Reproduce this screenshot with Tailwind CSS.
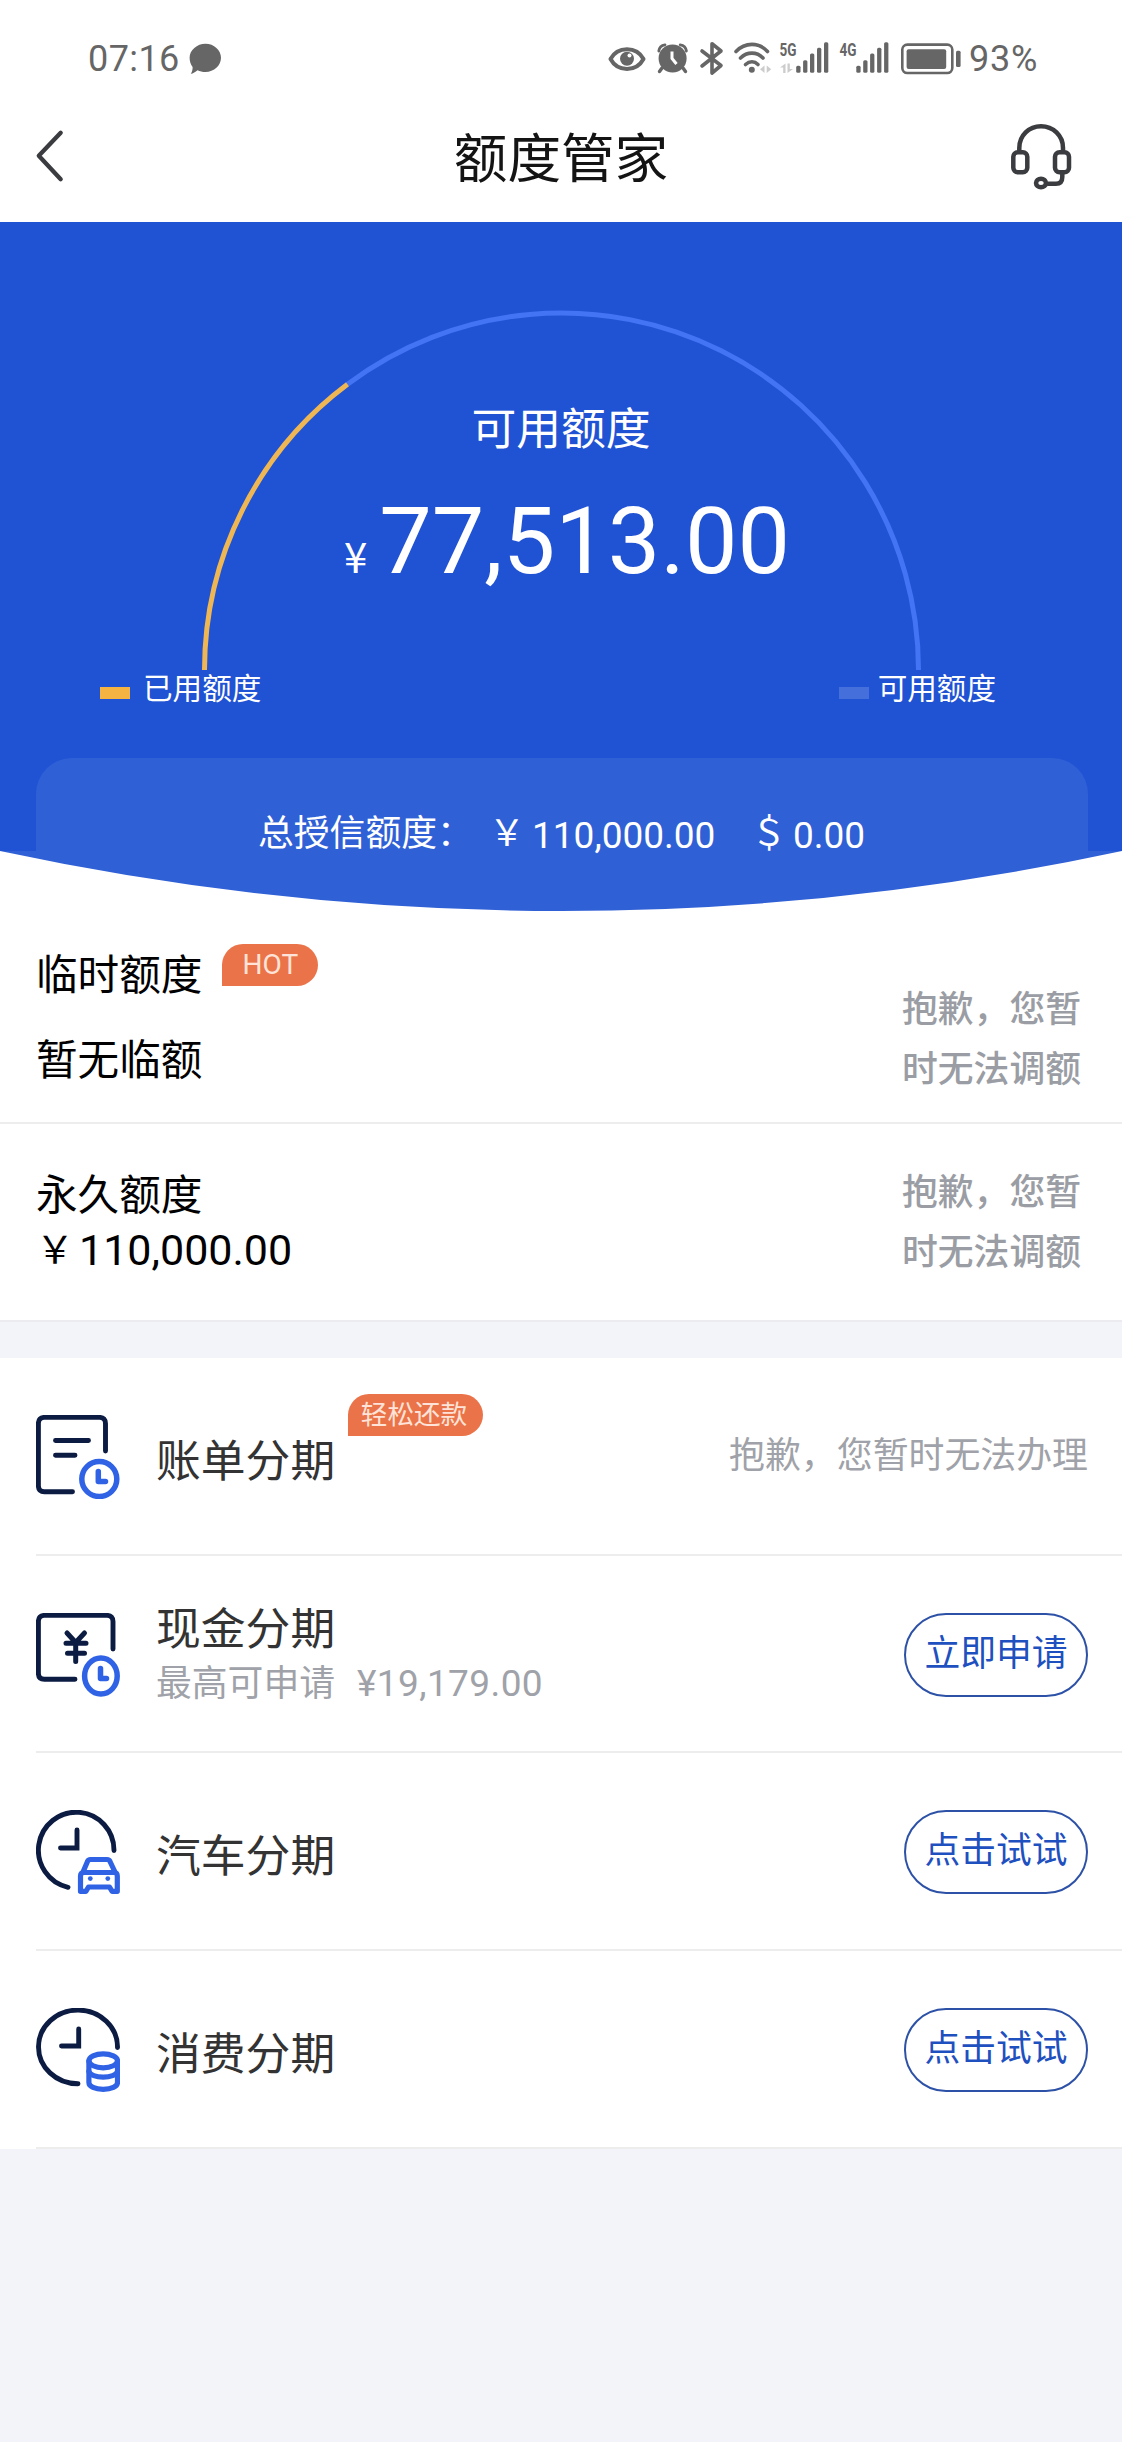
<!DOCTYPE html>
<html lang="zh-CN">
<head>
<meta charset="utf-8">
<title>额度管家</title>
<script src="https://cdn.jsdelivr.net/npm/@tailwindcss/browser@4"></script>
</head>
<body class="w-[1122px] h-[2442px] overflow-hidden bg-[#f2f4f9] font-[Roboto,'Noto_Sans_CJK_SC',sans-serif] whitespace-nowrap">

<!-- status bar -->
<div class="h-[90px] bg-white flex items-end pl-[88px] text-[#666]">
  <div class="text-[36px] leading-[36px] h-[49px] w-[96px] tracking-[0.4px]">07:16</div>
  <svg class="w-[40px] h-[50px] shrink-0" viewBox="184 40 40 50" fill="#666"><path d="M205.500 43.700C214 43.700 221 50 221 57.800S214 72 205.500 72C202.500 72 199.800 71.300 197.500 70.200C195.500 72 193 73.500 190.800 73.800C192.200 71.800 192.700 69.500 192.600 67C190.700 64.500 189.600 61.300 189.600 57.800C189.600 50 197 43.700 205.500 43.700Z"/></svg>
  <div class="flex items-end ml-auto pr-[82px]">
    <svg class="w-[46px] h-[50px]" viewBox="605 40 46 50"><path d="M610.500 59C614 52.500 620 49.200 627 49.200S640 52.500 643.500 59C640 65.500 634 68.900 627 68.900S614 65.500 610.500 59Z" fill="none" stroke="#666" stroke-width="4" stroke-linejoin="round"/><circle cx="627" cy="58.800" r="7" fill="#666"/><circle cx="629.500" cy="55.600" r="2" fill="#fff"/></svg>
    <svg class="w-[44px] h-[50px]" viewBox="651 40 44 50"><circle cx="672.600" cy="58.500" r="14" fill="#666"/><path d="M658.800 51C659.200 48 661.500 45.300 665 44.800M686.400 51C686 48 683.700 45.300 680.200 44.800" stroke="#666" stroke-width="2.800" fill="none" stroke-linecap="round"/><path d="M662 68L659.500 71.500M683 68L685.500 71.500" stroke="#666" stroke-width="3.400" stroke-linecap="round"/><path d="M672 51.500V58.500L676.500 64" stroke="#fff" stroke-width="3" fill="none"/></svg>
    <svg class="w-[36px] h-[50px]" viewBox="695 40 36 50"><path d="M702 51L721 65.500L712 73V43.700L721 51L702 66" stroke="#666" stroke-width="3.600" fill="none" stroke-linejoin="round" stroke-linecap="round"/></svg>
    <svg class="w-[44px] h-[50px]" viewBox="731 40 44 50"><g stroke="#666" stroke-width="3.600" fill="none" stroke-linecap="round"><path d="M736 51.500C745 42 759 42 767.500 51.500"/><path d="M740.500 58C747 51.500 757 51.500 763 58"/><path d="M745.500 64.500C749.500 61 754.500 61 758 64.500"/></g><circle cx="751.800" cy="69.700" r="3" fill="#666"/><path d="M760 69.200L764.500 65.500V73ZM771.200 69.200L766.700 65.500V73Z" fill="#ccc"/></svg>
    <svg class="w-[60px] h-[50px]" viewBox="775 40 60 50"><text x="779.500" y="56" font-size="18" font-weight="700" textLength="17" lengthAdjust="spacingAndGlyphs" fill="#666">5G</text><path d="M780 67.500L785.500 63.500V73H783.200V67.500ZM793 69L787.500 73V63.500H789.800V69Z" fill="#ccc"/><g fill="#666"><rect x="796.200" y="65.700" width="4.300" height="7" rx="1.500"/><rect x="803.100" y="60.300" width="4.300" height="12.400" rx="1.500"/><rect x="810" y="53.500" width="4.300" height="19.200" rx="1.500"/><rect x="817" y="47.800" width="4.300" height="24.900" rx="1.500"/><rect x="824" y="42.300" width="4.300" height="30.400" rx="1.500"/></g></svg>
    <svg class="w-[60px] h-[50px]" viewBox="835 40 60 50"><text x="839.500" y="56" font-size="18" font-weight="700" textLength="17" lengthAdjust="spacingAndGlyphs" fill="#666">4G</text><g fill="#666"><rect x="856.300" y="65.700" width="4.300" height="7" rx="1.500"/><rect x="863.200" y="60.300" width="4.300" height="12.400" rx="1.500"/><rect x="870.100" y="53.500" width="4.300" height="19.200" rx="1.500"/><rect x="877.100" y="47.800" width="4.300" height="24.900" rx="1.500"/><rect x="884.100" y="42.300" width="4.300" height="30.400" rx="1.500"/></g></svg>
    <svg class="w-[73px] h-[50px]" viewBox="895 40 73 50"><rect x="902.300" y="44.600" width="50" height="28.400" rx="5" fill="none" stroke="#666" stroke-width="2.600"/><rect x="906.600" y="49.300" width="39.600" height="19.600" rx="2" fill="#666"/><rect x="956" y="50.700" width="4.600" height="16.300" rx="1.500" fill="#666"/></svg>
    <div class="text-[36px] leading-[36px] h-[49px] w-[72px] pl-px tracking-[0.8px]">93%</div>
  </div>
</div>

<!-- title bar -->
<div class="h-[132px] bg-white flex items-start justify-between px-[31px]">
  <svg class="w-[80px] h-[110px]" viewBox="31 90 80 110"><path d="M60.700 132.800L38.800 155.800L60.700 179.200" stroke="#3a3c3f" stroke-width="4.300" fill="none" stroke-linecap="round" stroke-linejoin="round"/></svg>
  <h1 class="text-[53.600px] leading-[60px] pt-[40px] text-[#141414]">额度管家</h1>
  <svg class="w-[80px] h-[110px]" viewBox="1011 90 80 110"><g stroke="#3a3c3f" stroke-width="4.500" fill="none" stroke-linecap="round"><path d="M1019.300 151V148C1019.300 135.500 1029 126.300 1041 126.300S1063 135.500 1063 148V151"/><rect x="1013.300" y="152.200" width="14" height="20" rx="4.500"/><rect x="1055" y="152.200" width="14" height="20" rx="4.500"/><path d="M1062.300 173V177C1062.300 181.500 1060 183.800 1056 183.800H1048"/><ellipse cx="1041" cy="183" rx="5" ry="4.200"/></g></svg>
</div>

<!-- credit gauge -->
<section class="relative h-[689px] bg-[#2052d4] text-white overflow-hidden">
  <svg class="absolute inset-x-0 top-0 w-full h-[460px]" viewBox="0 222 1122 460" fill="none" stroke-width="5"><path d="M347.500 384.300A357 357 0 0 1 918.500 670" stroke="#4274f4"/><path d="M204.500 670A357 357 0 0 1 347.500 384.300" stroke="#efb654"/></svg>
  <div class="relative flex flex-col items-center pt-[180px]">
    <div class="text-[44.800px] leading-[56px]">可用额度</div>
    <div class="flex items-baseline h-[110px] mt-[28px] ml-[12px]">
      <span class="text-[42px] font-['Noto_Sans_CJK_SC'] mr-[12px]">¥</span>
      <span class="text-[93.500px] leading-[110px]">77,513.00</span>
    </div>
  </div>
  <div class="relative flex justify-between items-center h-[36px] mt-[75px] pl-[100px] pr-[126px] text-[29.600px] leading-[36px]">
    <div class="flex items-center"><i class="w-[30px] h-[12px] mt-[7px] mr-[13px] bg-[#f5b342]"></i>已用额度</div>
    <div class="flex items-center"><i class="w-[30px] h-[12px] mt-[7px] mr-[9px] bg-[#456fdb]"></i>可用额度</div>
  </div>
  <div class="ml-[36px] mr-[34px] mt-[51px] h-[93px] rounded-t-[36px] bg-[#3060d6]"></div>
  <svg class="block w-full h-[60px]" viewBox="0 0 1122 60"><rect width="1122" height="60" fill="#fff"/><path d="M0 0Q561 120 1122 0Z" fill="#3060d6"/></svg>
  <div class="absolute left-[258px] top-[588px] flex items-center h-[50px] text-[35.800px]">
    <span class="w-[231px]">总授信额度：</span><span class="w-[43px]">￥</span><span class="w-[219px] pt-[2px] text-[37px]">110,000.00</span><span class="w-[42px]">＄</span><span class="pt-[2px] text-[37px]">0.00</span>
  </div>
</section>

<!-- limits -->
<section class="h-[213px] bg-white border-b-2 border-[#ededed] flex justify-between pl-[36px] pr-[41px]">
  <div class="pt-[33px] text-[41.600px] leading-[60px] text-black">
    <div class="flex items-start h-[60px]"><span class="pt-[2px]">临时额度</span><span class="ml-[20px] w-[96px] h-[42px] rounded-[21px] rounded-bl-none bg-[#eb7349] text-[#ffe3d8] text-[28px] leading-[42px] text-center">HOT</span></div>
    <div class="mt-[27px]">暂无临额</div>
  </div>
  <div class="pt-[69px] text-[35.800px] leading-[60px] font-medium text-[#9a9da4]">抱歉，您暂<br>时无法调额</div>
</section>
<section class="h-[196px] bg-white flex justify-between pl-[36px] pr-[41px]">
  <div class="pt-[44px] text-[41.600px] leading-[56px] text-black">
    <div>永久额度</div>
    <div class="flex text-[43px] -mt-[2px]"><span class="w-[43px] text-[38px]">￥</span><span>110,000.00</span></div>
  </div>
  <div class="pt-[39px] text-[35.800px] leading-[60px] font-medium text-[#9a9da4]">抱歉，您暂<br>时无法调额</div>
</section>
<div class="h-[38px] border-t-2 border-[#ebebf0]"></div>

<!-- instalments -->
<section class="bg-white pl-[36px] text-[#333]">
  <div class="h-[198px] border-b-2 border-[#ededed] flex pr-[34px]">
    <svg class="w-[84px] h-[84px] mt-[57px] shrink-0" viewBox="0 0 84 84" fill="none" stroke="#0b1b42" stroke-width="4.900" stroke-linecap="round"><path d="M69.500 36V8.500Q69.500 2.400 63.500 2.400H8.400Q2.400 2.400 2.400 8.500V70.700Q2.400 76.700 8.400 76.700H36.500"/><path d="M19.500 25.500H52.500M19.500 40.200H39"/><g stroke="#2f62e4" stroke-width="5.500"><circle cx="63.300" cy="64" r="17.500"/><path d="M62.300 56.500V66.500H69.500" stroke-linejoin="round"/></g></svg>
    <div class="relative ml-[36px] pt-[74px] text-[44.800px] leading-[60px]">账单分期
      <span class="absolute left-[192px] top-[36px] w-[135px] h-[42px] rounded-[21px] rounded-bl-none bg-[#eb7349] text-[#ffe3d8] text-[26.600px] leading-[42px] pr-[3px] text-center">轻松还款</span>
    </div>
    <div class="ml-auto pt-[68px] text-[35.900px] leading-[60px] text-[#9fa2a8]">抱歉，您暂时无法办理</div>
  </div>
  <div class="h-[197px] border-b-2 border-[#ededed] flex pr-[34px]">
    <svg class="w-[84px] h-[84px] mt-[57px] shrink-0" viewBox="0 0 84 84" fill="none" stroke="#0b1b42" stroke-width="4.900" stroke-linecap="round"><path d="M77 36V8.500Q77 2.400 71 2.400H8.400Q2.400 2.400 2.400 8.500V60.300Q2.400 66.300 8.400 66.300H39"/><path d="M31 20L39.700 29.500L48.500 20M39.700 29.500V48.500M30 30.200H50M31.500 40.300H48.500" stroke-width="5"/><g stroke="#2f62e4" stroke-width="5.500"><ellipse cx="64.900" cy="63" rx="16.300" ry="18"/><path d="M64.500 55.500V65.500H70.500" stroke-linejoin="round"/></g></svg>
    <div class="ml-[36px] pt-[44px]">
      <div class="text-[44.800px] leading-[60px]">现金分期</div>
      <div class="flex text-[35.800px] leading-[48px] text-[#9fa2a8]"><span class="w-[201px]">最高可申请</span><span class="text-[37px] tracking-[0.4px]">¥19,179.00</span></div>
    </div>
    <button class="ml-auto mt-[57px] w-[184px] h-[84px] rounded-full border-2 border-[#2c51a6] text-[35.800px] leading-[80px] pb-[2px] text-[#1f50bf]"><span class="block -mt-px">立即申请</span></button>
  </div>
  <div class="h-[198px] border-b-2 border-[#ededed] flex pr-[34px]">
    <svg class="w-[84px] h-[84px] mt-[57px] shrink-0" viewBox="0 0 84 84" fill="none" stroke="#0b1b42" stroke-width="4.900" stroke-linecap="round"><path d="M78 40.500A37.800 38 0 1 0 32 77.300"/><path d="M41 20V38H24.500"/><g stroke="#2f62e4" stroke-width="5.200" stroke-linejoin="round"><path d="M47 62L51.500 51.500Q52.200 49.500 54.500 49.500H71Q73.300 49.500 74 51.500L79 62"/><path d="M44.500 81.300V66Q44.500 62.500 48 62.500H78Q81.300 62.500 81.300 66V81.300H76L73.500 77H52.500L50 81.300Z"/></g><circle cx="54.300" cy="68.600" r="2.400" fill="#2f62e4" stroke="none"/><circle cx="71.800" cy="68.600" r="2.400" fill="#2f62e4" stroke="none"/></svg>
    <div class="ml-[36px] pt-[74px] text-[44.800px] leading-[60px]">汽车分期</div>
    <button class="ml-auto mt-[57px] w-[184px] h-[84px] rounded-full border-2 border-[#2c51a6] text-[35.800px] leading-[80px] pb-[2px] text-[#1f50bf]"><span class="block -mt-px">点击试试</span></button>
  </div>
  <div class="h-[198px] border-b-2 border-[#ededed] flex pr-[34px]">
    <svg class="w-[84px] h-[84px] mt-[57px] shrink-0" viewBox="0 0 84 84" fill="none" stroke="#0b1b42" stroke-width="4.900" stroke-linecap="round"><path d="M81.500 39.500A39.500 36.800 0 1 0 42 75.700"/><path d="M42.700 21V38H25.500"/><g stroke="#2f62e4" stroke-width="5.200"><ellipse cx="67.200" cy="52.800" rx="14.300" ry="7"/><path d="M52.900 53V74.500C52.900 78.500 59 81.300 67.200 81.300S81.500 78.500 81.500 74.500V53"/><path d="M52.900 63.500C54 67 60 69.200 67.200 69.200S80.400 67 81.500 63.500"/></g></svg>
    <div class="ml-[36px] pt-[74px] text-[44.800px] leading-[60px]">消费分期</div>
    <button class="ml-auto mt-[57px] w-[184px] h-[84px] rounded-full border-2 border-[#2c51a6] text-[35.800px] leading-[80px] pb-[2px] text-[#1f50bf]"><span class="block -mt-px">点击试试</span></button>
  </div>
</section>
</body>
</html>
